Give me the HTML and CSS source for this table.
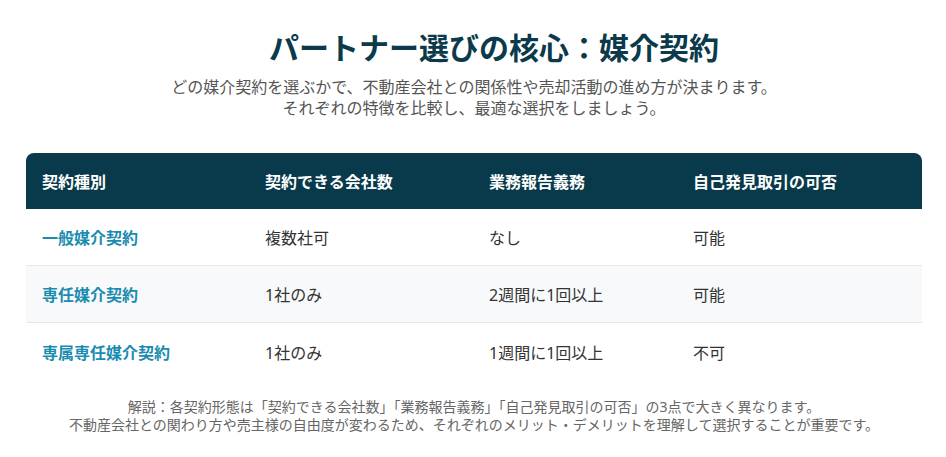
FILE: index.html
```html
<!DOCTYPE html>
<html lang="ja">
<head>
  <meta charset="UTF-8" />
  <meta name="viewport" content="width=device-width, initial-scale=1.0" />
  <title>媒介契約の比較</title>
  <link rel="stylesheet" href="styles.css">
</head>
<body>
  <main class="container">
    <h1 class="title">パートナー選びの核心：媒介契約</h1>
    <p class="lead">どの媒介契約を選ぶかで、不動産会社との関係性や売却活動の進め方が決まります。<br>それぞれの特徴を比較し、最適な選択をしましょう。</p>

    <table class="compare">
      <thead>
        <tr>
          <th class="col-type">契約種別</th>
          <th class="col-count">契約できる会社数</th>
          <th class="col-report">業務報告義務</th>
          <th class="col-self">自己発見取引の可否</th>
        </tr>
      </thead>
      <tbody>
        <tr>
          <td class="name">一般媒介契約</td>
          <td>複数社可</td>
          <td>なし</td>
          <td>可能</td>
        </tr>
        <tr>
          <td class="name">専任媒介契約</td>
          <td>1社のみ</td>
          <td>2週間に1回以上</td>
          <td>可能</td>
        </tr>
        <tr>
          <td class="name">専属専任媒介契約</td>
          <td>1社のみ</td>
          <td>1週間に1回以上</td>
          <td>不可</td>
        </tr>
      </tbody>
    </table>

    <p class="note">解説：各契約形態は「契約できる会社数」「業務報告義務」「自己発見取引の可否」の3点で大きく異なります。<br>不動産会社との関わり方や売主様の自由度が変わるため、それぞれのメリット・デメリットを理解して選択することが重要です。</p>
  </main>
</body>
</html>
```

FILE: styles.css
```css
body {
  margin: 0;
  font-family: "Noto Sans", "Noto Sans CJK JP", sans-serif;
  background: #fff;
  color: #333;
}

.container {
  max-width: 896px;
  margin: 0 auto;
  padding: 27px 0 0 2px;
  text-align: center;
}

.title {
  margin: 0;
  padding-left: 40px;
  font-size: 30px;
  line-height: 42px;
  font-weight: 700;
  color: #0b3a4a;
}

.lead {
  margin: 8px 0 0;
  font-size: 16px;
  line-height: 21px;
  color: #555;
}

.compare {
  width: 100%;
  margin-top: 34px;
  table-layout: fixed;
  border-collapse: separate;
  border-spacing: 0;
  text-align: left;
  font-size: 16px;
}

.compare th,
.compare td {
  box-sizing: border-box;
  padding: 0 16px;
}

.compare th {
  background: #083a4b;
  color: #fff;
  font-weight: 700;
  height: 56px;
}

.compare th:first-child {
  border-top-left-radius: 8px;
}

.compare th:last-child {
  border-top-right-radius: 8px;
}

.col-type { width: 223px; }
.col-count { width: 224px; }
.col-report { width: 204px; }

.compare td {
  height: 57px;
  color: #333;
  border-bottom: 1px solid #e5e7eb;
}

.compare tbody tr:last-child td {
  border-bottom: none;
}

.compare tbody tr:nth-child(2) td {
  background: #f8f9fa;
}

.compare td.name {
  color: #1a8cb0;
  font-weight: 700;
}

.note {
  margin: 18px 0 0;
  font-size: 14px;
  line-height: 18px;
  color: #666;
}
```
